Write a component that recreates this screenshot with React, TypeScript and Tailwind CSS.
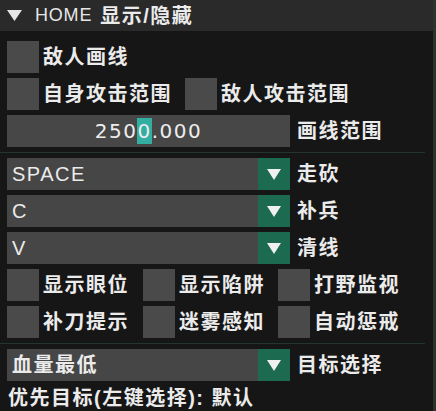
import React from "react";

const font = {
  fontFamily: '"Liberation Sans", "Noto Sans CJK SC", sans-serif',
};

function Box() {
  return <div className="w-[32px] h-[32px] shrink-0 bg-[#4a4a4a]" />;
}

function Label({ children, thin = false }: { children: React.ReactNode; thin?: boolean }) {
  return (
    <span
      className={`text-[20px] leading-[22px] tracking-[1.5px] text-[#ebebeb] whitespace-nowrap ${
        thin ? "font-normal" : "font-bold"
      }`}
    >
      {children}
    </span>
  );
}

function Check({ label, className = "" }: { label: string; className?: string }) {
  return (
    <div className={`flex items-center gap-[4px] h-[32px] ${className}`}>
      <Box />
      <Label>{label}</Label>
    </div>
  );
}

function Arrow() {
  return (
    <svg width="14" height="11" viewBox="0 0 14 11">
      <polygon points="0,0 14,0 7,11" fill="#f0f0f0" />
    </svg>
  );
}

function Combo({ value, label, thin = false }: { value: string; label: string; thin?: boolean }) {
  return (
    <div className="flex items-center gap-[7px] h-[32px]">
      <div className="flex w-[283px] h-[32px] bg-[#464646]">
        <div className="flex-1 flex items-center pl-[5px]">
          <Label thin={thin}>{value}</Label>
        </div>
        <div className="w-[32px] h-[32px] bg-[#1c6a50] flex items-center justify-center">
          <Arrow />
        </div>
      </div>
      <Label>{label}</Label>
    </div>
  );
}

function Separator() {
  return <div className="h-[1px] w-[425px] -ml-[7px] bg-[#24352d]" />;
}

export default function App() {
  return (
    <div
      className="w-[436px] h-[411px] overflow-hidden bg-[#161616] border-r-[3px] border-[#2d322e] flex flex-col"
      style={font}
    >
      {/* title bar */}
      <div className="h-[31px] shrink-0 bg-[#2a2a2a] flex items-center pl-[7px]">
        <svg width="15" height="11" viewBox="0 0 15 11" className="mr-[13px]">
          <polygon points="0,0 15,0 7.5,11" fill="#e6e6e6" />
        </svg>
        <span className="text-[18px] font-normal tracking-[0.8px] text-[#e6e6e6] mr-[8px]">HOME</span>
        <Label>显示/隐藏</Label>
      </div>

      <div className="flex flex-col gap-[5px] pl-[7px] pt-[10px]">
        <Check label="敌人画线" />
        <div className="flex">
          <Check label="自身攻击范围" className="w-[178px]" />
          <Check label="敌人攻击范围" />
        </div>

        {/* range slider */}
        <div className="flex items-center gap-[7px] h-[32px]">
          <div className="w-[283px] h-[32px] bg-[#474747] flex items-center justify-center">
            <span
              className="text-[20px] tracking-[1.5px] text-[#ededed]"
              style={{ fontFamily: '"DejaVu Sans", sans-serif' }}
            >
              250<span className="bg-[#32aea2] inline-block h-[26px] leading-[26px]">0</span>.000
            </span>
          </div>
          <Label>画线范围</Label>
        </div>

        <Separator />

        <Combo value="SPACE" label="走砍" thin />
        <Combo value="C" label="补兵" thin />
        <Combo value="V" label="清线" thin />

        <div className="grid grid-cols-[136px_135px_1fr]">
          <Check label="显示眼位" />
          <Check label="显示陷阱" />
          <Check label="打野监视" />
        </div>
        <div className="grid grid-cols-[136px_135px_1fr]">
          <Check label="补刀提示" />
          <Check label="迷雾感知" />
          <Check label="自动惩戒" />
        </div>

        <Separator />

        <Combo value="血量最低" label="目标选择" />
        <div className="pl-[1px] pt-[1px]">
          <Label>优先目标(左键选择): 默认</Label>
        </div>
      </div>
    </div>
  );
}
